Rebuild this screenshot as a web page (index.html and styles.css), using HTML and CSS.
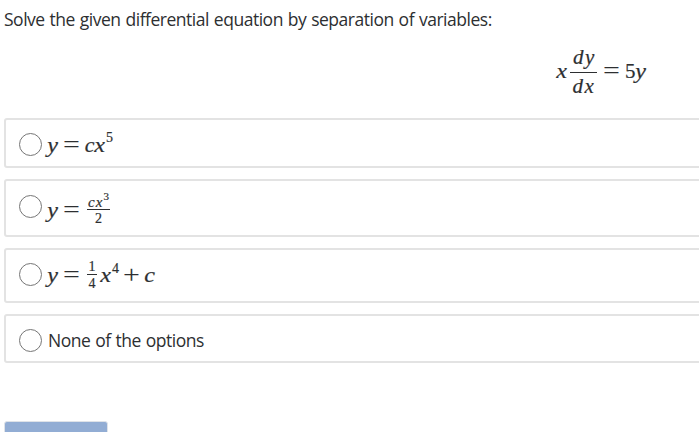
FILE: index.html
```
<!DOCTYPE html>
<html lang="en">
<head>
    <meta charset="UTF-8">
    <meta name="viewport" content="width=device-width, initial-scale=1.0">
    <title>Question</title>
    <link rel="stylesheet" href="styles.css">
</head>
<body>
    <main class="question">
        <p class="prompt">Solve the given differential equation by separation of variables:</p>

        <div class="math display">
            <i class="var">x</i>
            <span class="frac derivative">
                <span class="num"><i>dy</i></span>
                <span class="den"><i>dx</i></span>
            </span>
            <span class="op">=</span>
            <span class="digit">5</span><i class="var">y</i>
        </div>

        <div class="options">
            <label class="option option-power">
                <input type="radio" name="answer">
                <span class="math">
                    <i class="var">y</i><span class="op">=</span><i class="var coef">c</i><i class="var">x</i><sup>5</sup>
                </span>
            </label>
            <label class="option option-fraction">
                <input type="radio" name="answer">
                <span class="math">
                    <i class="var">y</i><span class="op">=</span>
                    <span class="frac small wide">
                        <span class="num"><i>cx</i><sup>3</sup></span>
                        <span class="den">2</span>
                    </span>
                </span>
            </label>
            <label class="option option-sum">
                <input type="radio" name="answer">
                <span class="math">
                    <i class="var">y</i><span class="op">=</span>
                    <span class="frac small">
                        <span class="num">1</span>
                        <span class="den">4</span>
                    </span>
                    <i class="var">x</i><sup>4</sup><span class="op plus">+</span><i class="var">c</i>
                </span>
            </label>
            <label class="option option-text">
                <input type="radio" name="answer">
                <span>None of the options</span>
            </label>
        </div>

        <button class="submit" type="button" aria-label="Submit"></button>
    </main>
</body>
</html>
```

FILE: styles.css
```
* {
    box-sizing: border-box;
}

html {
    overflow: hidden;
}

body {
    margin: 0;
    height: 432px;
    overflow: hidden;
    background: #fff;
    color: #2d2f31;
    font-family: "Open Sans", "Noto Sans", sans-serif;
    font-size: 17.5px;
    letter-spacing: -0.48px;
    word-spacing: 0.8px;
}

.question {
    width: 1198px;
    padding: 7px 0 0 4px;
}

.prompt {
    margin: 0;
    height: 24px;
    line-height: 25px;
    white-space: nowrap;
}

.math {
    display: inline-flex;
    align-items: center;
    font-family: "Liberation Serif", serif;
    font-size: 21px;
    line-height: 20px;
    letter-spacing: 0;
    white-space: nowrap;
    -webkit-text-stroke: 0.2px;
}

.display {
    display: flex;
    justify-content: center;
    height: 80px;
}

.var {
    width: 11px;
    text-align: center;
    transform: scaleX(1.15);
}

.coef {
    width: 9px;
    transform: scaleX(1.05);
}

.digit {
    width: 10px;
}

.op {
    width: 27px;
    font-size: 26px;
    text-align: center;
    transform: scaleX(1.15);
    -webkit-text-stroke: 0;
}

.frac {
    display: inline-flex;
    flex-direction: column;
    align-items: stretch;
    text-align: center;
}

.derivative {
    width: 27px;
    margin: 3px 1px 0 3px;
    letter-spacing: 1.5px;
}

.derivative .num {
    height: 26px;
    padding: 0 0 0 2px;
    border-bottom: 1px solid #2d2f31;
}

.derivative .den {
    height: 25px;
    padding: 3px 0 0 1px;
}

.small {
    width: 10px;
    margin: 0 3px 0 2px;
    font-size: 14px;
    line-height: 14px;
}

.small .num {
    height: 15px;
    border-bottom: 1px solid #2d2f31;
}

.small .den {
    height: 15px;
    padding-top: 2px;
}

.wide {
    width: 23px;
}

.wide i {
    font-size: 15px;
    letter-spacing: 1px;
}

sup {
    align-self: flex-start;
    margin-top: -4px;
    padding-left: 1px;
    font-size: 14px;
    line-height: 14px;
    vertical-align: baseline;
}

.wide sup {
    position: relative;
    top: -7px;
    padding: 0;
    font-size: 11px;
    line-height: 1;
}

.options {
    display: flex;
    flex-direction: column;
    gap: 11px;
    margin-top: 7px;
}

.option {
    display: flex;
    align-items: flex-start;
    gap: 5px;
    padding: 13px;
    border: 2px solid #e3e3e3;
    border-radius: 3px;
}

.option input {
    appearance: none;
    flex: none;
    width: 23px;
    height: 23px;
    margin: 0;
    border: 1px solid #767676;
    border-radius: 50%;
    background: #fff;
}

.option-power {
    height: 50px;
}

.option-fraction {
    height: 58px;
    padding-top: 14px;
}

.option-sum {
    height: 55px;
}

.option-text {
    height: 49px;
    gap: 6px;
    line-height: 23px;
}

.option-power .math {
    margin-top: 2px;
}

.option-sum .math {
    margin-top: -3px;
}

.option-sum sup {
    margin-top: 2px;
}

.option-sum .plus {
    width: 25px;
}

.submit {
    display: block;
    width: 104px;
    height: 40px;
    margin-top: 58px;
    border: 1px solid #dfe3e8;
    border-radius: 3px;
    background: #92add4;
}
```
